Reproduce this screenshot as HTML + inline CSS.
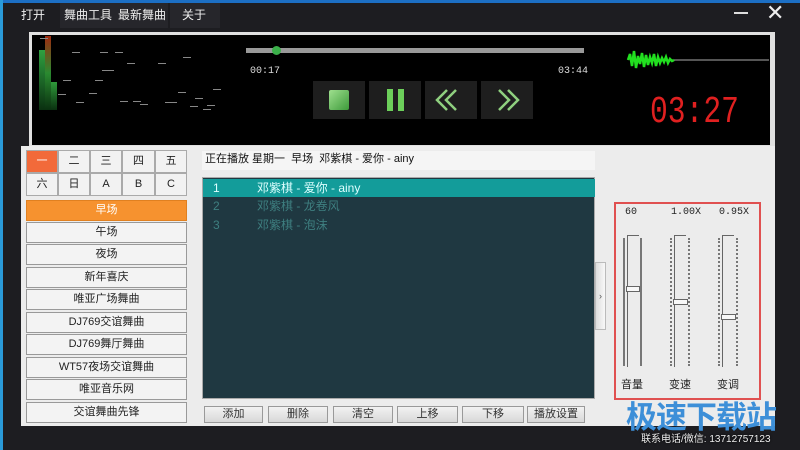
<!DOCTYPE html>
<html><head><meta charset="utf-8"><style>
*{margin:0;padding:0;box-sizing:border-box}
body{width:800px;height:450px;overflow:hidden;background:#1d1d21;font-family:"Liberation Sans","Noto Sans CJK SC",sans-serif;position:relative}
.a{position:absolute}
.menu{position:absolute;color:#eee;font-size:12px;top:3px;height:25px;line-height:25px;text-align:center;white-space:nowrap}
.cell{position:absolute;background:#f2f2f2;border:1px solid #aaa;font-size:11px;text-align:center;line-height:21px;color:#222}
.lb{position:absolute;left:26px;width:161px;height:21px;background:#f3f3f3;border:1px solid #999;font-size:11px;text-align:center;line-height:19px;color:#222}
.bb{position:absolute;top:406px;height:17px;background:linear-gradient(#f2f2f2,#d8d8d8);border:1px solid #999;font-size:11px;text-align:center;line-height:15px;color:#333}
.ctl{position:absolute;top:81px;width:52px;height:38px;background:#1e1e1e}
.dash{position:absolute;height:1px;width:8px;background:#888}
.row{position:absolute;left:203px;width:392px;height:18px;font-size:12px;line-height:18px;color:#3e7f80}
</style></head><body>
<div class="a" style="left:0;top:0;width:800px;height:3px;background:#1c6fc4"></div>
<div class="a" style="left:0;top:0;width:3px;height:450px;background:#2a9ad8"></div>
<div class="a" style="left:60px;top:3px;width:108px;height:25px;background:#26262b"></div>
<div class="a" style="left:170px;top:3px;width:50px;height:25px;background:#26262b"></div>
<div class="menu" style="left:14px;width:38px">打开</div>
<div class="menu" style="left:62px;width:52px">舞曲工具</div>
<div class="menu" style="left:116px;width:52px">最新舞曲</div>
<div class="menu" style="left:172px;width:44px">关于</div>
<div class="a" style="left:734px;top:12px;width:14px;height:2px;background:#ddd"></div>
<div class="a" style="left:766px;top:2px;color:#eee;font-size:22px;line-height:22px">✕</div>
<!-- player -->
<div class="a" style="left:29px;top:32px;width:746px;height:114px;background:#e0e0e0"></div>
<div class="a" style="left:32px;top:35px;width:738px;height:110px;background:#000"></div>
<div class="a" style="left:39px;top:50px;width:6px;height:60px;background:linear-gradient(#2fa040,#0a3010)"></div>
<div class="a" style="left:45px;top:36px;width:6px;height:74px;background:linear-gradient(#a02a10,#2a8a30,#0a3010)"></div>
<div class="a" style="left:51px;top:82px;width:6px;height:28px;background:linear-gradient(#2f9a3a,#0a3010)"></div>
<div class="dash" style="left:72px;top:52px"></div><div class="dash" style="left:100px;top:52px"></div><div class="dash" style="left:115px;top:52px"></div><div class="dash" style="left:127px;top:63px"></div><div class="dash" style="left:158px;top:63px"></div><div class="dash" style="left:183px;top:57px"></div><div class="dash" style="left:102px;top:70px;width:12px"></div><div class="dash" style="left:63px;top:80px"></div><div class="dash" style="left:95px;top:80px"></div><div class="dash" style="left:89px;top:93px"></div><div class="dash" style="left:58px;top:94px"></div><div class="dash" style="left:76px;top:102px"></div><div class="dash" style="left:120px;top:101px"></div><div class="dash" style="left:133px;top:101px"></div><div class="dash" style="left:140px;top:104px"></div><div class="dash" style="left:165px;top:102px;width:12px"></div><div class="dash" style="left:178px;top:92px"></div><div class="dash" style="left:195px;top:98px"></div><div class="dash" style="left:190px;top:106px"></div><div class="dash" style="left:203px;top:109px"></div><div class="dash" style="left:207px;top:105px"></div><div class="dash" style="left:213px;top:89px"></div><div class="dash" style="left:40px;top:38px"></div>
<div class="a" style="left:246px;top:48px;width:338px;height:5px;background:#999"></div>
<div class="a" style="left:272px;top:46px;width:9px;height:9px;border-radius:50%;background:#3bb04a"></div>
<div class="a" style="left:250px;top:66px;color:#ddd;font-size:10px;font-family:'Liberation Mono',monospace">00:17</div>
<div class="a" style="left:558px;top:66px;color:#ddd;font-size:10px;font-family:'Liberation Mono',monospace">03:44</div>
<div class="ctl" style="left:313px"><div class="a" style="left:16px;top:9px;width:20px;height:20px;border-radius:2px;background:linear-gradient(135deg,#9fe08f,#3d9a3a)"></div></div>
<div class="ctl" style="left:369px"><div class="a" style="left:18px;top:8px;width:6px;height:22px;background:#6ccf5a"></div><div class="a" style="left:29px;top:8px;width:6px;height:22px;background:#6ccf5a"></div></div>
<div class="ctl" style="left:425px"><svg width="52" height="38"><path d="M22 9 L12 19 L22 29 M31 9 L21 19 L31 29" stroke="#8fd07f" stroke-width="2.5" fill="none"/></svg></div>
<div class="ctl" style="left:481px"><svg width="52" height="38"><path d="M18 9 L28 19 L18 29 M27 9 L37 19 L27 29" stroke="#8fd07f" stroke-width="2.5" fill="none"/></svg></div>
<svg class="a" style="left:626px;top:48px" width="145" height="24"><path d="M2 12 L4 6 L6 18 L8 3 L10 20 L12 8 L14 16 L16 5 L18 19 L20 7 L22 17 L24 9 L26 15 L28 6 L30 18 L32 9 L34 15 L36 10 L38 14 L40 9 L42 15 L44 11 L46 13 L48 12" stroke="#22e020" stroke-width="2.5" fill="none"/><path d="M48 12 L143 12" stroke="#aaa" stroke-width="1"/></svg>
<div class="a" style="left:650px;top:93px;color:#e02020;font-size:38px;line-height:40px;font-family:'Liberation Mono',monospace;transform:scaleX(0.78);transform-origin:left top;white-space:nowrap">03:27</div>
<!-- panel -->
<div class="a" style="left:21px;top:146px;width:754px;height:280px;background:#ececec"></div>
<div class="cell" style="left:26px;top:150px;width:32px;height:23px;background:#f26a3a;color:#fff">一</div>
<div class="cell" style="left:58px;top:150px;width:32px;height:23px">二</div>
<div class="cell" style="left:90px;top:150px;width:32px;height:23px">三</div>
<div class="cell" style="left:122px;top:150px;width:33px;height:23px">四</div>
<div class="cell" style="left:155px;top:150px;width:32px;height:23px">五</div>
<div class="cell" style="left:26px;top:173px;width:32px;height:23px">六</div>
<div class="cell" style="left:58px;top:173px;width:32px;height:23px">日</div>
<div class="cell" style="left:90px;top:173px;width:32px;height:23px">A</div>
<div class="cell" style="left:122px;top:173px;width:33px;height:23px">B</div>
<div class="cell" style="left:155px;top:173px;width:32px;height:23px">C</div>
<div class="lb" style="top:200px;background:#f6922f;color:#fff;border-color:#e08020">早场</div>
<div class="lb" style="top:222px">午场</div>
<div class="lb" style="top:244px">夜场</div>
<div class="lb" style="top:267px">新年喜庆</div>
<div class="lb" style="top:289px">唯亚广场舞曲</div>
<div class="lb" style="top:312px">DJ769交谊舞曲</div>
<div class="lb" style="top:334px">DJ769舞厅舞曲</div>
<div class="lb" style="top:357px">WT57夜场交谊舞曲</div>
<div class="lb" style="top:379px">唯亚音乐网</div>
<div class="lb" style="top:402px">交谊舞曲先锋</div>
<div class="a" style="left:202px;top:151px;width:393px;height:19px;background:#f5f5f5;font-size:11px;line-height:17px;padding-left:3px;color:#111;white-space:pre">正在播放 星期一  早场  邓紫棋 - 爱你 - ainy</div>
<div class="a" style="left:202px;top:177px;width:393px;height:222px;background:#1f3841;border:1px solid #aaa"></div>
<div class="row" style="top:179px;background:#139c9a;color:#dff"><span style="position:absolute;left:10px">1</span><span style="position:absolute;left:54px">邓紫棋 - 爱你 - ainy</span></div>
<div class="row" style="top:197px"><span style="position:absolute;left:10px">2</span><span style="position:absolute;left:54px">邓紫棋 - 龙卷风</span></div>
<div class="row" style="top:216px"><span style="position:absolute;left:10px">3</span><span style="position:absolute;left:54px">邓紫棋 - 泡沫</span></div>
<div class="bb" style="left:204px;width:59px">添加</div>
<div class="bb" style="left:268px;width:60px">删除</div>
<div class="bb" style="left:333px;width:60px">清空</div>
<div class="bb" style="left:397px;width:61px">上移</div>
<div class="bb" style="left:462px;width:62px">下移</div>
<div class="bb" style="left:527px;width:58px">播放设置</div>
<div class="a" style="left:595px;top:262px;width:11px;height:68px;background:linear-gradient(90deg,#ddd,#f8f8f8);border:1px solid #bbb;font-size:9px;line-height:66px;text-align:center;color:#555">›</div>
<div class="a" style="left:614px;top:202px;width:147px;height:198px;border:2px solid #e05050"></div>
<div class="a" style="left:625px;top:207px;font-size:10px;color:#222;font-family:'Liberation Mono',monospace">60</div>
<div class="a" style="left:671px;top:207px;font-size:10px;color:#222;font-family:'Liberation Mono',monospace">1.00X</div>
<div class="a" style="left:719px;top:207px;font-size:10px;color:#222;font-family:'Liberation Mono',monospace">0.95X</div>
<!-- sliders -->
<div class="a" style="left:623px;top:238px;width:2px;height:128px;background:#777"></div>
<div class="a" style="left:640px;top:238px;width:2px;height:128px;background:#777"></div>
<div class="a" style="left:627px;top:235px;width:12px;height:132px;border-left:1px solid #666;border-top:1px solid #666"></div>
<div class="a" style="left:626px;top:286px;width:14px;height:6px;background:#f8f8f8;border:1px solid #666"></div>
<div class="a" style="left:670px;top:238px;width:1px;height:128px;border-left:2px dotted #777"></div>
<div class="a" style="left:688px;top:238px;width:1px;height:128px;border-left:2px dotted #777"></div>
<div class="a" style="left:674px;top:235px;width:12px;height:132px;border-left:1px solid #666;border-top:1px solid #666"></div>
<div class="a" style="left:673px;top:299px;width:15px;height:6px;background:#f8f8f8;border:1px solid #666"></div>
<div class="a" style="left:718px;top:238px;width:1px;height:128px;border-left:2px dotted #777"></div>
<div class="a" style="left:736px;top:238px;width:1px;height:128px;border-left:2px dotted #777"></div>
<div class="a" style="left:722px;top:235px;width:12px;height:132px;border-left:1px solid #666;border-top:1px solid #666"></div>
<div class="a" style="left:721px;top:314px;width:15px;height:6px;background:#f8f8f8;border:1px solid #666"></div>
<div class="a" style="left:621px;top:376px;font-size:11px;color:#222">音量</div>
<div class="a" style="left:669px;top:376px;font-size:11px;color:#222">变速</div>
<div class="a" style="left:717px;top:376px;font-size:11px;color:#222">变调</div>
<div class="a" style="left:626px;top:398px;font-size:31px;font-weight:bold;color:#3d8fd8;letter-spacing:-1px;line-height:40px;white-space:nowrap">极速下载站</div>
<div class="a" style="left:641px;top:430px;font-size:10px;color:#eee;text-shadow:0 0 2px #000;white-space:nowrap">联系电话/微信: 13712757123</div>
</body></html>
